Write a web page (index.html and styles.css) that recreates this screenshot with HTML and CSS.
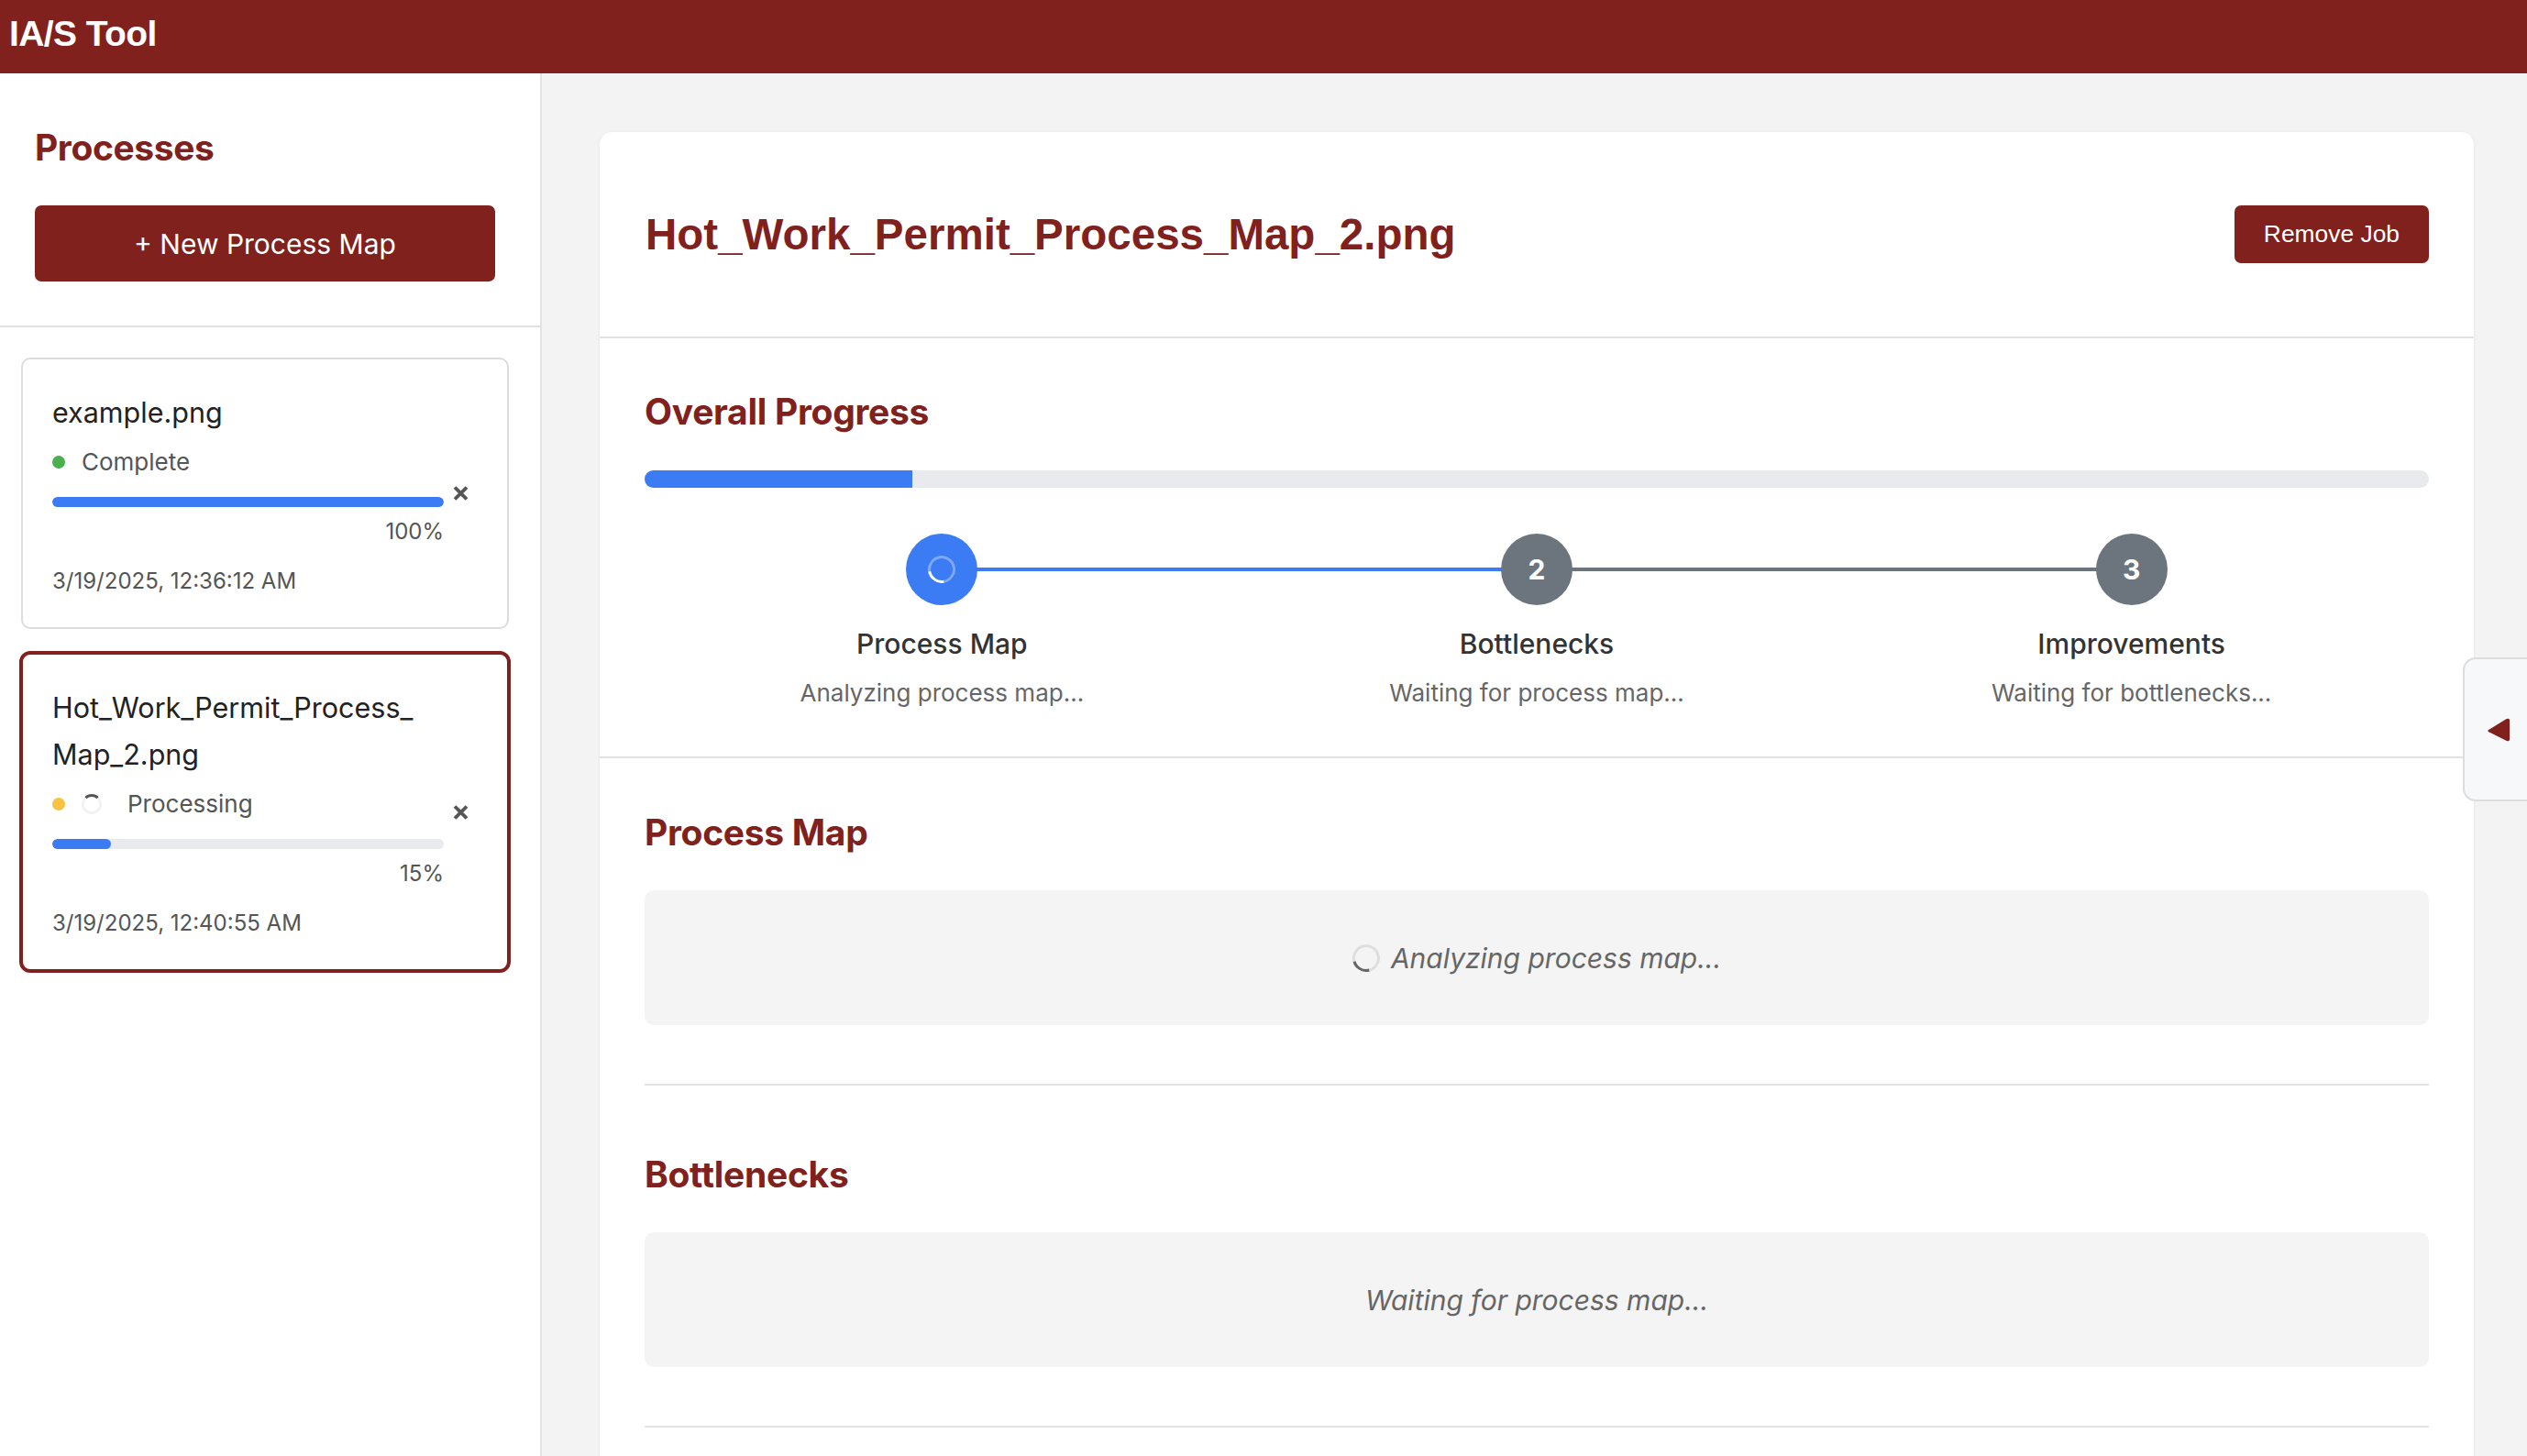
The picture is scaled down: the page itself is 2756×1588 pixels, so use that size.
FILE: index.html
```html
<!DOCTYPE html>
<html lang="en">
<head>
<meta charset="utf-8">
<title>IA/S Tool</title>
<link rel="stylesheet" href="styles.css">
</head>
<body>
<div class="app">
  <header class="topbar"><h1 class="logo">IA/S Tool</h1></header>
  <div class="layout">
    <aside class="sidebar">
      <div class="sidebar-head">
        <h2 class="sidebar-title">Processes</h2>
        <button class="btn-new">+ New Process Map</button>
      </div>
      <div class="job-list">
        <div class="job-card">
          <div class="job-name">example.png</div>
          <div class="job-status"><span class="dot dot-green"></span><span>Complete</span></div>
          <div class="job-progress">
            <div class="job-bar"><div class="job-fill" style="width:100%"></div></div>
            <div class="job-pct">100%</div>
          </div>
          <div class="job-date">3/19/2025, 12:36:12 AM</div>
          <button class="job-close" aria-label="Remove"><svg viewBox="0 0 17 17" width="17" height="17"><path d="M2 2L15 15M15 2L2 15" stroke="#555" stroke-width="3.8" stroke-linecap="butt"/></svg></button>
        </div>
        <div class="job-card active">
          <div class="job-name">Hot_Work_Permit_Process_<wbr>Map_2.png</div>
          <div class="job-status"><span class="dot dot-yellow"></span><span class="mini-spinner"></span><span>Processing</span></div>
          <div class="job-progress">
            <div class="job-bar"><div class="job-fill" style="width:15%"></div></div>
            <div class="job-pct">15%</div>
          </div>
          <div class="job-date">3/19/2025, 12:40:55 AM</div>
          <button class="job-close" aria-label="Remove"><svg viewBox="0 0 17 17" width="17" height="17"><path d="M2 2L15 15M15 2L2 15" stroke="#555" stroke-width="3.8" stroke-linecap="butt"/></svg></button>
        </div>
      </div>
    </aside>
    <main class="main">
      <section class="panel">
        <div class="panel-head">
          <h2 class="job-title">Hot_Work_Permit_Process_Map_2.png</h2>
          <button class="btn-remove">Remove Job</button>
        </div>
        <div class="progress-sec">
          <h3 class="sec-title">Overall Progress</h3>
          <div class="overall-bar"><div class="overall-fill" style="width:15%"></div></div>
          <div class="steps">
            <div class="step done">
              <div class="step-circle active"><span class="step-spinner"></span></div>
              <div class="step-label">Process Map</div>
              <div class="step-sub">Analyzing process map...</div>
            </div>
            <div class="step">
              <div class="step-circle">2</div>
              <div class="step-label">Bottlenecks</div>
              <div class="step-sub">Waiting for process map...</div>
            </div>
            <div class="step">
              <div class="step-circle">3</div>
              <div class="step-label">Improvements</div>
              <div class="step-sub">Waiting for bottlenecks...</div>
            </div>
          </div>
        </div>
        <div class="results">
          <div class="result">
            <h3 class="sec-title">Process Map</h3>
            <div class="result-box"><span class="box-spinner"></span><span>Analyzing process map...</span></div>
          </div>
          <div class="result">
            <h3 class="sec-title">Bottlenecks</h3>
            <div class="result-box"><span>Waiting for process map...</span></div>
          </div>
        </div>
      </section>
    </main>
  </div>
  <button class="side-toggle" aria-label="Toggle panel"><svg viewBox="0 0 26 26" width="28" height="28"><path d="M3 13.8L21.5 2.6Q23.5 1.6 23.5 3.8V22.2Q23.5 24.4 21.5 23.4L3 14.2Z" fill="#80211d" stroke="#80211d" stroke-width="1.5" stroke-linejoin="round"/></svg></button>
</div>
</body>
</html>
```
FILE: styles.css
```css
html, body {
  margin: 0;
  padding: 0;
}

body {
  font-family: Inter, "Noto Sans", "Liberation Sans", sans-serif;
  color: #222;
}

.app {
  height: 100vh;
  display: flex;
  flex-direction: column;
  overflow: hidden;
}

.topbar {
  height: 80px;
  flex: none;
  box-sizing: border-box;
  background: #80211d;
  padding: 13px 10px 0;
}

.logo {
  margin: 0;
  font-family: "Liberation Sans", Arial, sans-serif;
  font-weight: 700;
  font-size: 39px;
  line-height: 48px;
  letter-spacing: -0.6px;
  color: #fff;
}

.layout {
  flex: 1;
  display: flex;
  min-height: 0;
}

.sidebar {
  width: 591px;
  flex: none;
  box-sizing: border-box;
  background: #fff;
  border-right: 2px solid #e3e3e3;
}

.sidebar-head {
  padding: 57px 49px 48px 38px;
  border-bottom: 2px solid #e0e0e0;
}

.sidebar-title {
  margin: 0 0 39px;
  font-size: 39px;
  line-height: 48px;
  font-weight: 700;
  letter-spacing: -0.4px;
  color: #80211d;
}

.btn-new {
  display: block;
  width: 100%;
  height: 83px;
  border: 0;
  border-radius: 7px;
  background: #80211d;
  color: #fff;
  font-family: Inter, "Noto Sans", sans-serif;
  font-size: 30px;
}

.job-list {
  padding: 33px 34px 0 23px;
  display: flex;
  flex-direction: column;
  gap: 24px;
}

.job-card {
  position: relative;
  border: 2px solid #dcdcdc;
  border-radius: 10px;
  padding: 32px;
  background: #fff;
}

.job-card.active {
  border: 4px solid #80211d;
  border-radius: 12px;
  margin: 0 -2px;
}

.job-name {
  font-size: 30.5px;
  line-height: 51px;
  color: #222;
}

.job-status {
  display: flex;
  align-items: center;
  gap: 18px;
  margin-top: 9px;
  font-size: 26px;
  line-height: 39px;
  color: #555;
}

.dot {
  width: 14px;
  height: 14px;
  border-radius: 50%;
  flex: none;
}

.dot-green {
  background: #4caf50;
}

.dot-yellow {
  background: #f6c343;
}

.mini-spinner {
  width: 16px;
  height: 16px;
  border: 3px solid #f2f2f2;
  border-top-color: #555;
  border-radius: 50%;
  margin-right: 10px;
  flex: none;
}

.job-progress {
  margin-right: 37px;
}

.job-bar {
  margin-top: 19px;
  height: 11px;
  background: #e9eaee;
  border-radius: 6px;
  overflow: hidden;
}

.job-fill {
  height: 100%;
  background: #3b7cf5;
  border-radius: 6px;
}

.job-pct {
  margin-top: 9px;
  text-align: right;
  font-size: 24px;
  line-height: 36px;
  color: #555;
}

.job-date {
  margin-top: 18px;
  font-size: 24px;
  line-height: 36px;
  color: #555;
}

.job-close {
  position: absolute;
  right: 42px;
  top: 50%;
  transform: translateY(-50%);
  width: 17px;
  height: 17px;
  padding: 0;
  border: 0;
  background: none;
  display: block;
}

.job-close svg {
  display: block;
}

.main {
  flex: 1;
  min-width: 0;
  background: #f3f3f3;
  padding: 64px 58px 0 63px;
  overflow: hidden;
}

.panel {
  background: #fff;
  border-radius: 14px;
  box-shadow: 0 1px 4px rgba(0, 0, 0, 0.06);
}

.panel-head {
  display: flex;
  align-items: center;
  justify-content: space-between;
  padding: 80px 49px 80px 50px;
  border-bottom: 2px solid #e2e2e2;
}

.job-title {
  margin: 0;
  font-family: "Liberation Sans", Arial, sans-serif;
  font-weight: 700;
  font-size: 47.5px;
  line-height: 56px;
  color: #80211d;
}

.btn-remove {
  height: 63px;
  padding: 0 32px;
  border: 0;
  border-radius: 7px;
  background: #80211d;
  color: #fff;
  font-family: "Liberation Sans", Arial, sans-serif;
  font-size: 26.4px;
}

.progress-sec {
  padding: 56px 49px 53px;
  border-bottom: 2px solid #e2e2e2;
}

.sec-title {
  margin: 0 0 40px;
  font-size: 39px;
  line-height: 48px;
  font-weight: 700;
  letter-spacing: -0.3px;
  color: #80211d;
}

.overall-bar {
  height: 19px;
  background: #e9eaee;
  border-radius: 10px;
  overflow: hidden;
}

.overall-fill {
  height: 100%;
  background: #3b7cf5;
}

.steps {
  display: flex;
  margin-top: 50px;
}

.step {
  flex: 1;
  position: relative;
  display: flex;
  flex-direction: column;
  align-items: center;
}

.step:not(:last-child)::after {
  content: "";
  position: absolute;
  top: 37px;
  left: 50%;
  width: 100%;
  height: 4px;
  background: #6c757d;
}

.step.done::after {
  background: #3b7cf5;
}

.step-circle {
  position: relative;
  z-index: 1;
  width: 78px;
  height: 78px;
  border-radius: 50%;
  background: #6c757d;
  color: #fff;
  display: flex;
  align-items: center;
  justify-content: center;
  font-size: 30px;
  font-weight: 700;
}

.step-circle.active {
  background: #3b7cf5;
}

.step-spinner {
  width: 24px;
  height: 24px;
  border: 3px solid rgba(255, 255, 255, 0.35);
  border-bottom-color: #fff;
  border-radius: 50%;
  transform: rotate(35deg);
}

.step-label {
  margin-top: 24px;
  font-size: 30px;
  line-height: 36px;
  font-weight: 500;
  color: #333;
}

.step-sub {
  margin-top: 20px;
  font-size: 26px;
  line-height: 32px;
  color: #666;
}

.results {
  padding: 57px 49px 73px;
}

.result {
  padding-bottom: 64px;
  border-bottom: 2px solid #e2e2e2;
  margin-bottom: 73px;
}

.result:last-child {
  margin-bottom: 0;
}

.result .sec-title {
  margin-bottom: 39px;
}

.result-box {
  height: 147px;
  background: #f4f4f4;
  border-radius: 10px;
  display: flex;
  align-items: center;
  justify-content: center;
  gap: 12px;
  font-size: 30px;
  font-style: italic;
  color: #666;
}

.box-spinner {
  width: 24px;
  height: 24px;
  border: 3px solid #dedede;
  border-bottom-color: #666;
  border-radius: 50%;
  transform: rotate(30deg);
}

.side-toggle {
  position: fixed;
  top: 717px;
  right: 0;
  width: 70px;
  height: 157px;
  box-sizing: border-box;
  padding: 0 0 0 6px;
  border: 2px solid #dddddd;
  border-right: 0;
  border-radius: 14px 0 0 14px;
  background: #f7f8fa;
  display: flex;
  align-items: center;
  justify-content: center;
}

.side-toggle svg {
  display: block;
}
```
